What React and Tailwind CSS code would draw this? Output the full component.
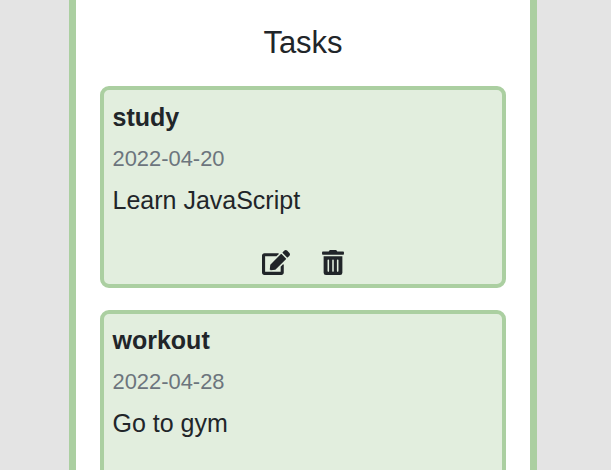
import React from 'react';
import { FaEdit, FaTrashAlt } from 'react-icons/fa';

const tasks = [
    { id: 1, title: 'study', date: '2022-04-20', description: 'Learn JavaScript' },
    { id: 2, title: 'workout', date: '2022-04-28', description: 'Go to gym' }
];

const TaskCard = ({ task }) => {
    return (
        <div className="h-[201.2px] shrink-0 flex flex-col rounded-[9px] border-4 border-[#abcfa1] bg-[#e2eede] px-[8.5px] pt-[8.8px]">
            <h2 className="text-[25px] leading-[37px] font-bold">{task.title}</h2>
            <p className="mt-[4px] text-[21.9px] leading-[37px] text-[#6c757d]">{task.date}</p>
            <p className="mt-[5px] text-[25px] leading-[37px]">{task.description}</p>
            <div className="mt-[31px] flex justify-center gap-[32px]">
                <button type="button" aria-label="Edit task">
                    <FaEdit className="w-[28px] h-[25px]" />
                </button>
                <button type="button" aria-label="Delete task">
                    <FaTrashAlt className="w-[22px] h-[25px]" />
                </button>
            </div>
        </div>
    );
};

const App = () => {
    return (
        <div className="h-screen overflow-hidden flex bg-[#e4e4e4] pl-[69px] font-['Liberation_Sans',Arial,sans-serif] text-[#212529]">
            <main className="w-[468px] border-x-[7px] border-[#abcfa1] bg-white px-[24px] pt-[23px]">
                <h1 className="text-center text-[31px] leading-[40px]">Tasks</h1>
                <div className="mt-[23.4px] flex flex-col gap-[22px]">
                    {tasks.map((task) => (
                        <TaskCard key={task.id} task={task} />
                    ))}
                </div>
            </main>
        </div>
    );
};

export default App;
